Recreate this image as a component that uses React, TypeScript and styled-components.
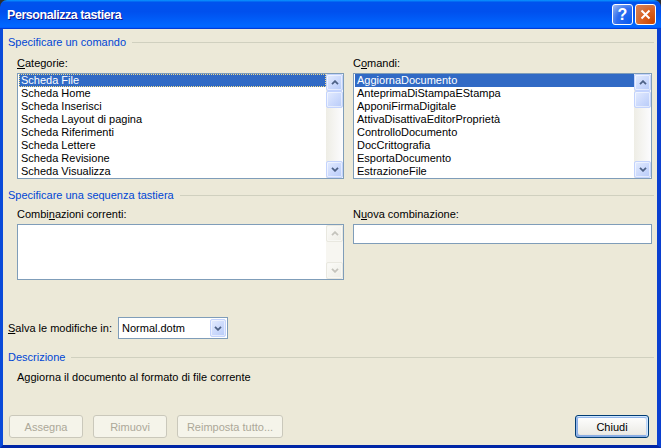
import styled, { createGlobalStyle } from "styled-components";

const GlobalStyle = createGlobalStyle`
  html, body {
    margin: 0;
    padding: 0;
    background: #2e2e2e;
  }
  body {
    font-family: "Liberation Sans", Arial, sans-serif;
    font-size: 11px;
    color: #000;
  }
`;

const Window = styled.div`
  width: 661px;
  height: 448px;
  display: flex;
  flex-direction: column;
  border-radius: 7px 7px 0 0;
  overflow: hidden;
`;

const TitleBar = styled.div`
  flex: none;
  height: 29px;
  box-sizing: border-box;
  display: flex;
  align-items: center;
  justify-content: space-between;
  padding: 0 5px 0 7px;
  background: linear-gradient(
    180deg,
    #0997ff,
    #0053ee 8%,
    #0050ee 40%,
    #06f 88%,
    #06f 93%,
    #005bff 95%,
    #003dd7 96%,
    #003dd7
  );
`;

const Title = styled.div`
  color: #fff;
  font-family: "Liberation Sans", Arial, sans-serif;
  font-weight: bold;
  font-size: 12.5px;
  letter-spacing: -0.45px;
  text-shadow: 1px 1px #0f1089;
  padding-top: 1px;
`;

const CaptionButtons = styled.div`
  display: flex;
  gap: 2px;
`;

const CaptionButton = styled.div<{ $kind: "help" | "close" }>`
  width: 21px;
  height: 21px;
  box-sizing: border-box;
  border: 1px solid #fff;
  border-radius: 3px;
  display: flex;
  align-items: center;
  justify-content: center;
  color: #fff;
  font-family: "Liberation Sans", Arial, sans-serif;
  font-weight: bold;
  font-size: 16px;
  background: ${(p) =>
    p.$kind === "close"
      ? "radial-gradient(circle at 90% 90%, #cc4600 0%, #dc6527 55%, #cd7546 70%, #e87d4c 100%)"
      : "radial-gradient(circle at 90% 90%, #0a5cf0 0%, #2d6cf0 55%, #5386ee 70%, #a8c0f0 100%)"};
`;

const Frame = styled.div`
  flex: 1;
  display: flex;
  flex-direction: column;
  background: #ece9d8;
  border-style: solid;
  border-width: 0 4px 3px 3px;
  border-color: #0a4ad9 #0a3fd0 #0026a6 #0a4ad9;
  padding: 7px 3px 7px 5px;
  min-height: 0;
`;

const GroupHeader = styled.div<{ $top: number }>`
  margin-top: ${(p) => p.$top}px;
  height: 13px;
  line-height: 13px;
  display: flex;
  align-items: center;
  gap: 6px;
  color: #0046d5;
  &::after {
    content: "";
    flex: 1;
    height: 1px;
    background: #d0d0bf;
  }
`;

const Columns = styled.div<{ $top: number }>`
  margin: ${(p) => p.$top}px 3px 0 9px;
  display: grid;
  grid-template-columns: 327px 299px;
  column-gap: 9px;
`;

const Field = styled.div`
  display: flex;
  flex-direction: column;
`;

const FieldLabel = styled.div`
  height: 13px;
  line-height: 13px;
  margin-bottom: 3px;
  white-space: nowrap;
`;

const ListBox = styled.div<{ $height: number }>`
  height: ${(p) => p.$height}px;
  box-sizing: border-box;
  border: 1px solid #7f9db9;
  background: #fff;
  display: flex;
`;

const ListItems = styled.div`
  flex: 1;
  padding-left: 1px;
  overflow: hidden;
`;

const ListItem = styled.div<{ $selected?: boolean; $focused?: boolean }>`
  height: 13px;
  line-height: 13px;
  padding-left: 2px;
  white-space: nowrap;
  background: ${(p) => (p.$selected ? "#316ac5" : "transparent")};
  color: ${(p) => (p.$selected ? "#fff" : "#000")};
  outline: ${(p) => (p.$focused ? "1px dotted #f3dc8a" : "none")};
  outline-offset: -1px;
`;

const ScrollBar = styled.div<{ $disabled?: boolean }>`
  width: 17px;
  flex: none;
  display: flex;
  flex-direction: column;
  background: ${(p) =>
    p.$disabled ? "#f7f6f1" : "linear-gradient(90deg, #eeede5, #fcfcfe)"};
`;

const ScrollButton = styled.div<{ $disabled?: boolean }>`
  width: 17px;
  height: 17px;
  flex: none;
  box-sizing: border-box;
  border: 1px solid ${(p) => (p.$disabled ? "#e9e8e0" : "#c3d3fd")};
  border-radius: 2px;
  display: flex;
  align-items: center;
  justify-content: center;
  background: ${(p) =>
    p.$disabled
      ? "linear-gradient(135deg, #fbfbf8, #eeede6)"
      : "linear-gradient(135deg, #e4ecfe 0%, #cbd9fc 55%, #b7cbf8 100%)"};
  box-shadow: inset 0 0 0 1px
    ${(p) => (p.$disabled ? "#f8f8f4" : "rgba(255,255,255,0.55)")};
`;

const Thumb = styled(ScrollButton)``;

const Track = styled.div`
  flex: 1;
`;

const Input = styled.div`
  height: 20px;
  box-sizing: border-box;
  border: 1px solid #7f9db9;
  background: #fff;
`;

const SaveRow = styled.div`
  margin-top: 37px;
  display: flex;
  align-items: center;
`;

const SaveLabel = styled.div`
  width: 110px;
  white-space: nowrap;
`;

const Select = styled.div`
  width: 110px;
  height: 22px;
  box-sizing: border-box;
  border: 1px solid #7f9db9;
  background: #fff;
  display: flex;
  align-items: center;
`;

const SelectValue = styled.div`
  flex: 1;
  padding-left: 3px;
`;

const DropButton = styled(ScrollButton)`
  width: 16px;
  height: 18px;
  margin-right: 1px;
`;

const DescText = styled.div`
  margin: 7px 0 0 9px;
  line-height: 13px;
`;

const ButtonRow = styled.div`
  margin-top: auto;
  display: flex;
  justify-content: space-between;
  padding: 0 5px 0 1px;
`;

const ButtonGroup = styled.div`
  display: flex;
  gap: 10px;
`;

const Button = styled.button<{ $width: number; $default?: boolean }>`
  width: ${(p) => p.$width}px;
  height: 23px;
  box-sizing: border-box;
  padding: 0;
  border-radius: 3px;
  font-family: "Liberation Sans", Arial, sans-serif;
  font-size: 11px;
  color: #000;
  border: 1px solid #003c74;
  background: linear-gradient(180deg, #fff, #ecebe6 86%, #d6d0c5);
  box-shadow: ${(p) =>
    p.$default
      ? "inset -1px 1px #cee7ff, inset 1px 2px #98b8ea, inset -2px 2px #bcd4f6, inset 1px -1px #89ade4, inset 2px -2px #89ade4"
      : "none"};
  &:disabled {
    color: #aca899;
    border-color: #cac8bb;
    background: #f5f4ea;
  }
`;

const Chevron = ({ dir, color }: { dir: "up" | "down"; color: string }) => (
  <svg width="8" height="5" viewBox="0 0 8 5">
    <path
      d={dir === "up" ? "M1 4.2 L4 1.2 L7 4.2" : "M1 0.8 L4 3.8 L7 0.8"}
      fill="none"
      stroke={color}
      strokeWidth="1.8"
    />
  </svg>
);

const VerticalScroll = ({ disabled }: { disabled?: boolean }) => {
  const c = disabled ? "#c4c3bc" : "#4d6185";
  return (
    <ScrollBar $disabled={disabled}>
      <ScrollButton $disabled={disabled}>
        <Chevron dir="up" color={c} />
      </ScrollButton>
      {!disabled && <Thumb />}
      <Track />
      <ScrollButton $disabled={disabled}>
        <Chevron dir="down" color={c} />
      </ScrollButton>
    </ScrollBar>
  );
};

const categories = [
  "Scheda File",
  "Scheda Home",
  "Scheda Inserisci",
  "Scheda Layout di pagina",
  "Scheda Riferimenti",
  "Scheda Lettere",
  "Scheda Revisione",
  "Scheda Visualizza",
];

const commands = [
  "AggiornaDocumento",
  "AnteprimaDiStampaEStampa",
  "ApponiFirmaDigitale",
  "AttivaDisattivaEditorProprietà",
  "ControlloDocumento",
  "DocCrittografia",
  "EsportaDocumento",
  "EstrazioneFile",
];

export default function App() {
  return (
    <>
      <GlobalStyle />
      <Window>
        <TitleBar>
          <Title>Personalizza tastiera</Title>
          <CaptionButtons>
            <CaptionButton $kind="help">?</CaptionButton>
            <CaptionButton $kind="close">
              <svg width="11" height="11" viewBox="0 0 11 11">
                <path d="M1.5 1.5 L9.5 9.5 M9.5 1.5 L1.5 9.5" stroke="#fff" strokeWidth="2" />
              </svg>
            </CaptionButton>
          </CaptionButtons>
        </TitleBar>
        <Frame>
          <GroupHeader $top={0}>Specificare un comando</GroupHeader>
          <Columns $top={8}>
            <Field>
              <FieldLabel>
                <u>C</u>ategorie:
              </FieldLabel>
              <ListBox $height={106}>
                <ListItems>
                  {categories.map((c, i) => (
                    <ListItem key={c} $selected={i === 0} $focused={i === 0}>
                      {c}
                    </ListItem>
                  ))}
                </ListItems>
                <VerticalScroll />
              </ListBox>
            </Field>
            <Field>
              <FieldLabel>
                C<u>o</u>mandi:
              </FieldLabel>
              <ListBox $height={106}>
                <ListItems>
                  {commands.map((c, i) => (
                    <ListItem key={c} $selected={i === 0}>
                      {c}
                    </ListItem>
                  ))}
                </ListItems>
                <VerticalScroll />
              </ListBox>
            </Field>
          </Columns>

          <GroupHeader $top={10}>Specificare una sequenza tastiera</GroupHeader>
          <Columns $top={6}>
            <Field>
              <FieldLabel>
                Combi<u>n</u>azioni correnti:
              </FieldLabel>
              <ListBox $height={56}>
                <ListItems />
                <VerticalScroll disabled />
              </ListBox>
            </Field>
            <Field>
              <FieldLabel>
                N<u>u</u>ova combinazione:
              </FieldLabel>
              <Input />
            </Field>
          </Columns>

          <SaveRow>
            <SaveLabel>
              <u>S</u>alva le modifiche in:
            </SaveLabel>
            <Select>
              <SelectValue>Normal.dotm</SelectValue>
              <DropButton>
                <Chevron dir="down" color="#4d6185" />
              </DropButton>
            </Select>
          </SaveRow>

          <GroupHeader $top={12}>Descrizione</GroupHeader>
          <DescText>Aggiorna il documento al formato di file corrente</DescText>

          <ButtonRow>
            <ButtonGroup>
              <Button $width={74} disabled>
                Assegna
              </Button>
              <Button $width={74} disabled>
                Rimuovi
              </Button>
              <Button $width={106} disabled>
                Reimposta tutto...
              </Button>
            </ButtonGroup>
            <Button $width={74} $default>
              Chiudi
            </Button>
          </ButtonRow>
        </Frame>
      </Window>
    </>
  );
}
